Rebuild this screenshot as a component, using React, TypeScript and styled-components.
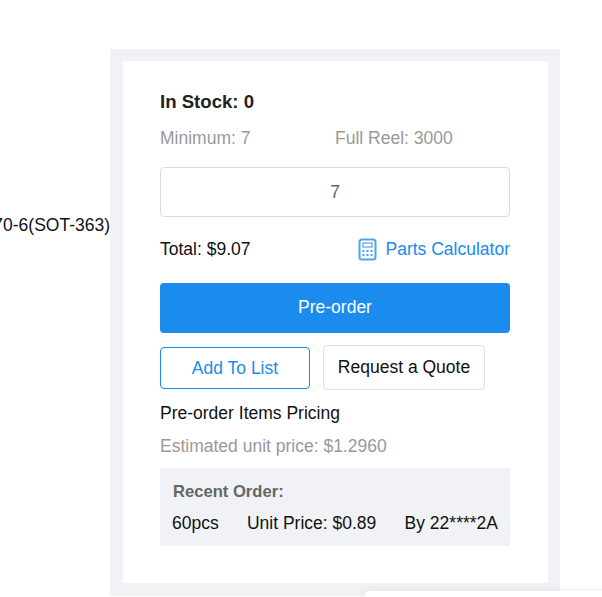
import React from 'react';
import styled, { createGlobalStyle } from 'styled-components';

// ----------
// Style
// ----------

const blue = '#1b8bee';
const iconBlue = '#4ba3f2';
const gray = '#999999';
const bodySize = '17.5px';

const GlobalStyle = createGlobalStyle`
  html, body {
    margin: 0;
    padding: 0;
    background: #fff;
    overflow: hidden;
  }

  body {
    font-family: 'Liberation Sans', Arial, sans-serif;
    color: #161616;
  }
`;

const Page = styled.div`
  position: relative;
  width: 602px;
  height: 597px;
  overflow: hidden;
  display: flex;
  align-items: flex-start;
  padding-top: 49px;
  box-sizing: border-box;
`;

const PackageColumn = styled.div`
  width: 110px;
  flex: none;
  overflow: hidden;
  display: flex;
  justify-content: flex-end;
  padding-top: 166px;
  font-size: ${bodySize};
  line-height: 20px;
  white-space: nowrap;
  color: #111;
`;

const Panel = styled.div`
  width: 450px;
  height: 547px;
  flex: none;
  box-sizing: border-box;
  background: #f0f2f6;
  padding: 12px 12px 13px 13px;
`;

const Card = styled.div`
  height: 522px;
  box-sizing: border-box;
  background: #fff;
  padding: 30px 38px 0 37px;
`;

const StockTitle = styled.div`
  font-size: 18.6px;
  font-weight: bold;
  line-height: 22px;
  color: #222;
`;

const InfoRow = styled.div`
  display: flex;
  margin-top: 15px;
  font-size: ${bodySize};
  line-height: 20px;
  color: ${gray};
`;

const InfoCell = styled.div`
  width: 175px;
`;

const QuantityInput = styled.div`
  margin-top: 19px;
  height: 50px;
  box-sizing: border-box;
  border: 1px solid #dcdcdc;
  border-radius: 4px;
  display: flex;
  align-items: center;
  justify-content: center;
  font-size: ${bodySize};
  color: #666;
`;

const TotalRow = styled.div`
  margin-top: 19px;
  height: 26px;
  display: flex;
  align-items: center;
  justify-content: space-between;
  font-size: ${bodySize};
  color: #111;
`;

const CalculatorLink = styled.a`
  display: flex;
  align-items: center;
  gap: 9px;
  color: ${blue};
`;

const PreOrderButton = styled.div`
  margin-top: 21px;
  height: 50px;
  box-sizing: border-box;
  padding-bottom: 2px;
  border-radius: 4px;
  background: ${blue};
  color: #fff;
  font-size: ${bodySize};
  display: flex;
  align-items: center;
  justify-content: center;
`;

const ButtonRow = styled.div`
  margin-top: 12px;
  display: flex;
  align-items: flex-start;
  gap: 13px;
`;

const OutlineButton = styled.div<{ $primary?: boolean }>`
  box-sizing: border-box;
  margin-top: ${(p) => (p.$primary ? '2px' : '0')};
  width: ${(p) => (p.$primary ? '150px' : '162px')};
  height: ${(p) => (p.$primary ? '42px' : '45px')};
  border: 1px solid ${(p) => (p.$primary ? blue : '#e0e0e0')};
  border-radius: 4px;
  color: ${(p) => (p.$primary ? blue : '#111')};
  font-size: ${bodySize};
  display: flex;
  align-items: center;
  justify-content: center;
`;

const PricingTitle = styled.div`
  margin-top: 13px;
  font-size: ${bodySize};
  line-height: 20px;
  color: #111;
`;

const EstimatedPrice = styled.div`
  margin-top: 13px;
  font-size: ${bodySize};
  line-height: 20px;
  color: ${gray};
`;

const RecentOrder = styled.div`
  margin-top: 12px;
  height: 78px;
  box-sizing: border-box;
  background: #f0f2f6;
  padding: 14px 12px 0 12px;
  font-size: ${bodySize};
  line-height: 20px;
`;

const RecentTitle = styled.div`
  padding-left: 1px;
  font-size: 16.6px;
  font-weight: bold;
  color: #666;
`;

const RecentRow = styled.div`
  margin-top: 11px;
  display: flex;
  justify-content: space-between;
  color: #111;
`;

const FloatingSheet = styled.div`
  position: absolute;
  left: 363px;
  top: 591px;
  width: 260px;
  height: 40px;
  background: #fff;
  border-radius: 8px 0 0 0;
  box-shadow: 0 0 10px rgba(0, 0, 0, 0.07);
`;

// ----------

const CalculatorIcon: React.FC = () => (
  <svg width="19" height="23" viewBox="0 0 19 23" fill="none">
    <rect x="1.5" y="1.5" width="16" height="20" rx="2.5" stroke={iconBlue} strokeWidth="2" />
    <rect x="5" y="5" width="9" height="4" stroke={iconBlue} strokeWidth="1.2" />
    {[5.5, 9.5, 13.5].map((cx) =>
      [13, 17].map((cy) => <rect key={`${cx}-${cy}`} x={cx - 1} y={cy - 1} width="2" height="2" fill={iconBlue} />),
    )}
  </svg>
);

const App: React.FC = () => (
  <Page>
    <GlobalStyle />
    <PackageColumn>70-6(SOT-363)</PackageColumn>
    <Panel>
      <Card>
        <StockTitle>In Stock: 0</StockTitle>
        <InfoRow>
          <InfoCell>Minimum: 7</InfoCell>
          <InfoCell>Full Reel: 3000</InfoCell>
        </InfoRow>
        <QuantityInput>7</QuantityInput>
        <TotalRow>
          <span>Total: $9.07</span>
          <CalculatorLink>
            <CalculatorIcon />
            Parts Calculator
          </CalculatorLink>
        </TotalRow>
        <PreOrderButton>Pre-order</PreOrderButton>
        <ButtonRow>
          <OutlineButton $primary>Add To List</OutlineButton>
          <OutlineButton>Request a Quote</OutlineButton>
        </ButtonRow>
        <PricingTitle>Pre-order Items Pricing</PricingTitle>
        <EstimatedPrice>Estimated unit price: $1.2960</EstimatedPrice>
        <RecentOrder>
          <RecentTitle>Recent Order:</RecentTitle>
          <RecentRow>
            <span>60pcs</span>
            <span>Unit Price: $0.89</span>
            <span>By 22****2A</span>
          </RecentRow>
        </RecentOrder>
      </Card>
    </Panel>
    <FloatingSheet />
  </Page>
);

export default App;
